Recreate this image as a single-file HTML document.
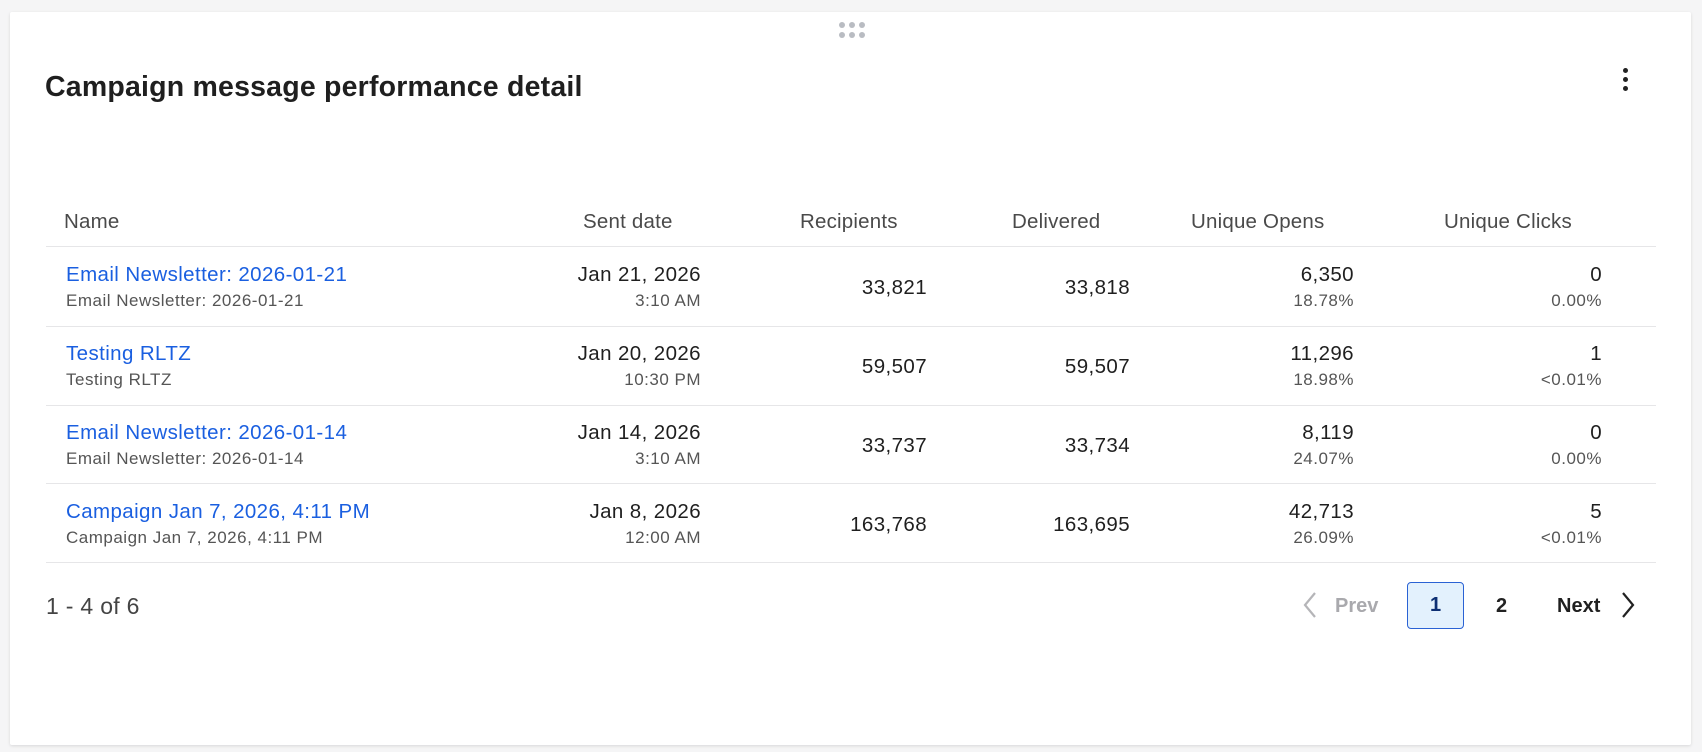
<!DOCTYPE html>
<html><head><meta charset="utf-8"><style>
body{margin:0;width:1702px;height:752px;background:#f5f5f6;font-family:"Liberation Sans",Arial,sans-serif;position:relative;overflow:hidden;color:#1f1f1f}
.card{position:absolute;left:10px;top:12px;width:1681px;height:733px;background:#fff;box-shadow:0 1px 3px rgba(0,0,0,.12);border-radius:2px}
.a{position:absolute;white-space:nowrap}
.r{text-align:right}
.line{position:absolute;left:46px;width:1610px;height:1px;background:#e6e6e8}
.h{font-size:20.5px;color:#4a4a4a;letter-spacing:0.2px}
.m{font-size:20.5px;color:#1f1f1f;letter-spacing:0.4px}
.s{font-size:17px;color:#555;letter-spacing:0.5px}
.lk{color:#1a5fe0}
.dot{position:absolute;width:6px;height:6px;border-radius:3px;background:#b9bcc2}
</style></head><body>
<div class="card"></div>
<div class="dot" style="left:839px;top:22px"></div><div class="dot" style="left:849px;top:22px"></div><div class="dot" style="left:859px;top:22px"></div>
<div class="dot" style="left:839px;top:32px"></div><div class="dot" style="left:849px;top:32px"></div><div class="dot" style="left:859px;top:32px"></div>
<div class="a" style="left:45px;top:71px;font-size:28.5px;font-weight:bold;color:#1f1f1f;letter-spacing:0.2px">Campaign message performance detail</div>
<div style="position:absolute;left:1623px;top:68px;width:5px;height:5px;border-radius:3px;background:#222"></div>
<div style="position:absolute;left:1623px;top:77px;width:5px;height:5px;border-radius:3px;background:#222"></div>
<div style="position:absolute;left:1623px;top:86px;width:5px;height:5px;border-radius:3px;background:#222"></div>

<div class="a h" style="left:64px;top:210px">Name</div>
<div class="a h" style="left:583px;top:210px">Sent date</div>
<div class="a h" style="left:800px;top:210px">Recipients</div>
<div class="a h" style="left:1012px;top:210px">Delivered</div>
<div class="a h" style="left:1191px;top:210px">Unique Opens</div>
<div class="a h" style="left:1444px;top:210px">Unique Clicks</div>
<div class="line" style="top:246px"></div>
<div class="line" style="top:326px"></div>
<div class="line" style="top:405px"></div>
<div class="line" style="top:483px"></div>
<div class="line" style="top:562px"></div>

<div class="a m lk" style="left:66px;top:263px">Email Newsletter: 2026-01-21</div>
<div class="a s" style="left:66px;top:291px">Email Newsletter: 2026-01-21</div>
<div class="a m r" style="right:1001px;top:263px">Jan 21, 2026</div>
<div class="a s r" style="right:1001px;top:291px">3:10 AM</div>
<div class="a m r" style="right:775px;top:276px">33,821</div>
<div class="a m r" style="right:572px;top:276px">33,818</div>
<div class="a m r" style="right:348px;top:263px">6,350</div>
<div class="a s r" style="right:348px;top:291px">18.78%</div>
<div class="a m r" style="right:100px;top:263px">0</div>
<div class="a s r" style="right:100px;top:291px">0.00%</div>

<div class="a m lk" style="left:66px;top:342px">Testing RLTZ</div>
<div class="a s" style="left:66px;top:370px">Testing RLTZ</div>
<div class="a m r" style="right:1001px;top:342px">Jan 20, 2026</div>
<div class="a s r" style="right:1001px;top:370px">10:30 PM</div>
<div class="a m r" style="right:775px;top:355px">59,507</div>
<div class="a m r" style="right:572px;top:355px">59,507</div>
<div class="a m r" style="right:348px;top:342px">11,296</div>
<div class="a s r" style="right:348px;top:370px">18.98%</div>
<div class="a m r" style="right:100px;top:342px">1</div>
<div class="a s r" style="right:100px;top:370px">&lt;0.01%</div>

<div class="a m lk" style="left:66px;top:421px">Email Newsletter: 2026-01-14</div>
<div class="a s" style="left:66px;top:449px">Email Newsletter: 2026-01-14</div>
<div class="a m r" style="right:1001px;top:421px">Jan 14, 2026</div>
<div class="a s r" style="right:1001px;top:449px">3:10 AM</div>
<div class="a m r" style="right:775px;top:434px">33,737</div>
<div class="a m r" style="right:572px;top:434px">33,734</div>
<div class="a m r" style="right:348px;top:421px">8,119</div>
<div class="a s r" style="right:348px;top:449px">24.07%</div>
<div class="a m r" style="right:100px;top:421px">0</div>
<div class="a s r" style="right:100px;top:449px">0.00%</div>

<div class="a m lk" style="left:66px;top:500px">Campaign Jan 7, 2026, 4:11 PM</div>
<div class="a s" style="left:66px;top:528px">Campaign Jan 7, 2026, 4:11 PM</div>
<div class="a m r" style="right:1001px;top:500px">Jan 8, 2026</div>
<div class="a s r" style="right:1001px;top:528px">12:00 AM</div>
<div class="a m r" style="right:775px;top:513px">163,768</div>
<div class="a m r" style="right:572px;top:513px">163,695</div>
<div class="a m r" style="right:348px;top:500px">42,713</div>
<div class="a s r" style="right:348px;top:528px">26.09%</div>
<div class="a m r" style="right:100px;top:500px">5</div>
<div class="a s r" style="right:100px;top:528px">&lt;0.01%</div>

<div class="a" style="left:46px;top:593px;font-size:23px;color:#444;letter-spacing:0.3px">1 - 4 of 6</div>
<svg style="position:absolute;left:1301px;top:591px" width="18" height="28" viewBox="0 0 18 28"><path d="M14 2 L4 14 L14 26" fill="none" stroke="#b5b5b8" stroke-width="2.2"/></svg>
<div class="a" style="left:1335px;top:595px;font-size:20px;font-weight:bold;color:#a9a9ad">Prev</div>
<div style="position:absolute;left:1407px;top:582px;width:57px;height:47px;box-sizing:border-box;border:1.5px solid #2a62d4;border-radius:4px;background:#e3f1fd;color:#0d2f73;font-size:20px;font-weight:bold;text-align:center;line-height:45px">1</div>
<div class="a" style="left:1496px;top:595px;font-size:20px;font-weight:bold;color:#222">2</div>
<div class="a" style="left:1557px;top:595px;font-size:20px;font-weight:bold;color:#1f1f1f">Next</div>
<svg style="position:absolute;left:1619px;top:591px" width="18" height="28" viewBox="0 0 18 28"><path d="M4 2 L14 14 L4 26" fill="none" stroke="#222" stroke-width="2.2"/></svg>
</body></html>
